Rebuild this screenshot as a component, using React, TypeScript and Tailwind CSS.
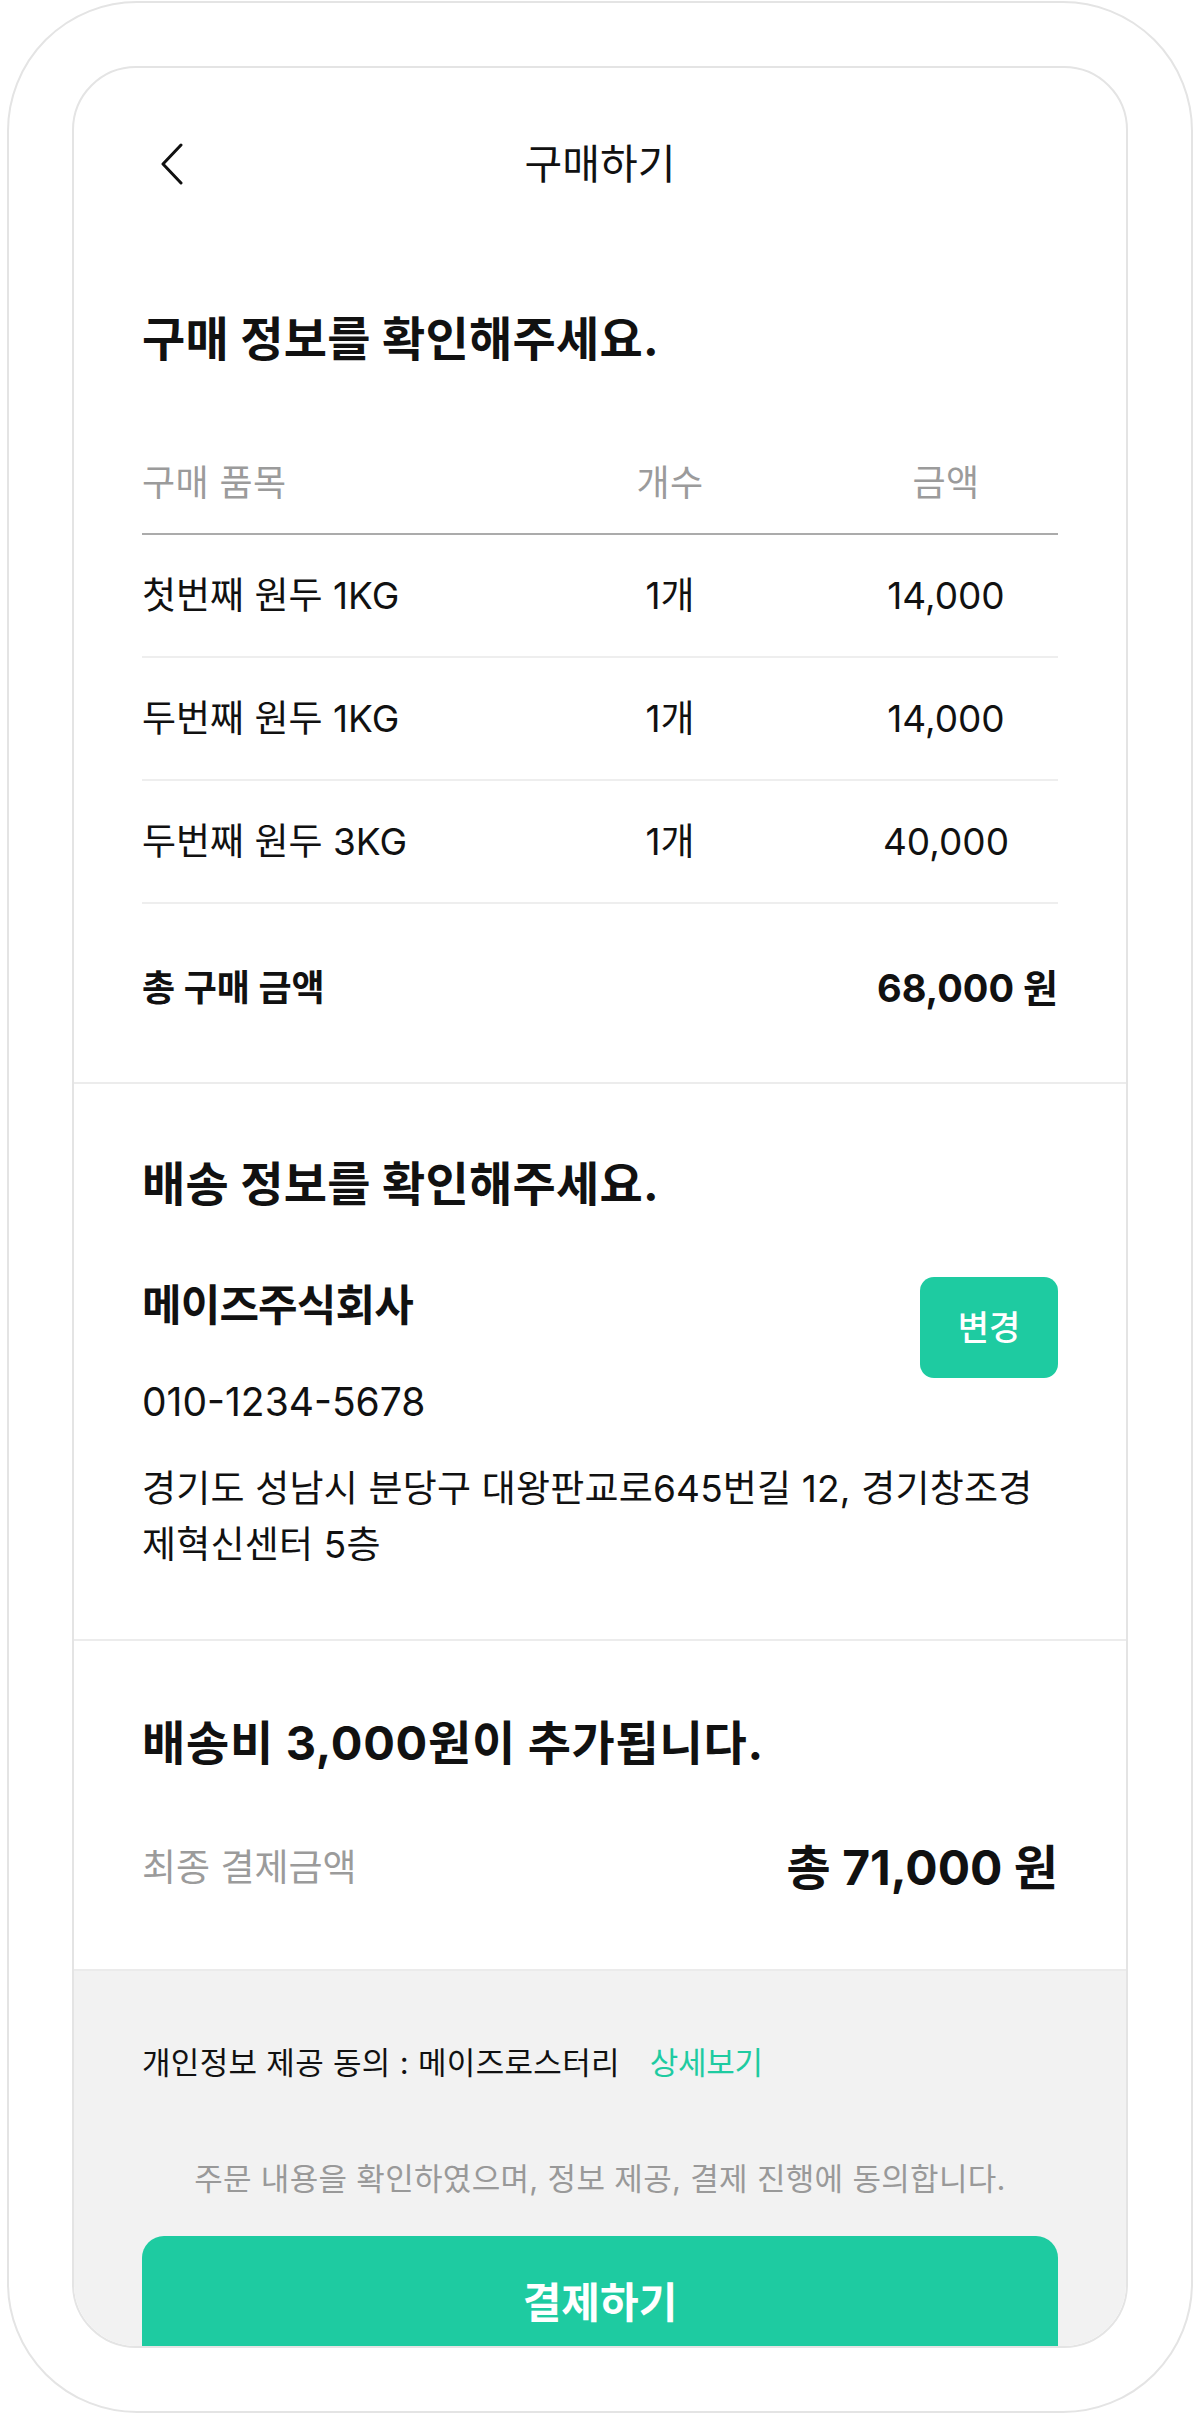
export default function App() {
  const rows = [
    { name: "첫번째 원두 1KG", qty: "1개", price: "14,000" },
    { name: "두번째 원두 1KG", qty: "1개", price: "14,000" },
    { name: "두번째 원두 3KG", qty: "1개", price: "40,000" },
  ];
  return (
    <div className="w-[1200px] h-[2414px] bg-white font-[Inter,'Noto_Sans_CJK_KR',sans-serif] text-[#111111] overflow-hidden">
      <div className="ml-[7px] mt-[1px] w-[1186px] h-[2412px] rounded-[130px] border-2 border-[#e4e4e4] pt-[63px] pl-[63px]">
        <div className="w-[1056px] h-[2282px] rounded-[64px] border-2 border-[#e4e4e4] overflow-hidden bg-white flex flex-col">
          {/* Nav */}
          <div className="h-[192px] shrink-0 grid grid-cols-[1fr_auto_1fr] items-center">
            <div className="pl-[86px] flex items-center">
              <svg width="24" height="42" viewBox="0 0 24 42" fill="none">
                <path d="M21 2 L3 21 L21 40" stroke="#111" strokeWidth="3" strokeLinecap="round" strokeLinejoin="round" />
              </svg>
            </div>
            <div className="text-[41px] leading-[56px] tracking-[0em]">구매하기</div>
            <div />
          </div>

          {/* Section 1 */}
          <div className="px-[68px] pt-[49px] border-b-2 border-[#ececec] shrink-0">
            <h1 className="text-[47px] leading-[60px] font-bold tracking-[0.005em]">구매 정보를 확인해주세요.</h1>
            <div className="mt-[90px] pb-[26px] grid grid-cols-[364px_328px_224px] text-[36px] leading-[48px] tracking-[0.01em] text-[#9b9b9b] border-b-2 border-[#ababab]">
              <div>구매 품목</div>
              <div className="text-center">개수</div>
              <div className="text-center">금액</div>
            </div>
            {rows.map((r, i) => (
              <div
                key={i}
                className="h-[123px] grid grid-cols-[364px_328px_224px] items-center text-[37px] leading-[48px] tracking-[0em] border-b-2 border-[#eeeeee]"
              >
                <div>{r.name}</div>
                <div className="text-center">{r.qty}</div>
                <div className="text-center">{r.price}</div>
              </div>
            ))}
            <div className="pt-[60px] pb-[70px] flex justify-between items-center h-[178px] font-bold">
              <div className="text-[36px] leading-[48px] tracking-[0em]">총 구매 금액</div>
              <div className="text-[38px] leading-[48px] tracking-[0em]">68,000 원</div>
            </div>
          </div>

          {/* Section 2 */}
          <div className="px-[68px] pt-[70px] pb-[66px] border-b-2 border-[#ececec] shrink-0">
            <h2 className="text-[47px] leading-[60px] font-bold tracking-[0.005em]">배송 정보를 확인해주세요.</h2>
            <div className="mt-[63px] flex justify-between items-start">
              <div>
                <div className="text-[43px] leading-[56px] font-bold tracking-[-0.02em]">메이즈주식회사</div>
                <div className="mt-[41px] text-[39px] leading-[56px] tracking-[0em]">010-1234-5678</div>
              </div>
              <button className="w-[138px] h-[101px] rounded-[14px] bg-[#1ecba1] text-white text-[34px] font-medium tracking-[0em] flex items-center justify-center">
                변경
              </button>
            </div>
            <div className="mt-[31px] text-[37px] leading-[56px] tracking-[0.005em]">
              경기도 성남시 분당구 대왕판교로645번길 12, 경기창조경
              <br />
              제혁신센터 5층
            </div>
          </div>

          {/* Section 3 */}
          <div className="px-[68px] pt-[72px] pb-[71px] shrink-0">
            <h2 className="text-[47px] leading-[60px] font-bold tracking-[0.015em]">배송비 3,000원이 추가됩니다.</h2>
            <div className="mt-[65px] flex justify-between items-center h-[60px]">
              <div className="text-[37px] leading-[48px] tracking-[0em] text-[#9b9b9b]">최종 결제금액</div>
              <div className="text-[48px] leading-[60px] font-bold tracking-[0em]">총 71,000 원</div>
            </div>
          </div>

          {/* Footer */}
          <div className="flex-1 bg-[#f2f2f2] border-t-2 border-[#ebebeb] px-[68px] pt-[72px]">
            <div className="flex items-center text-[31px] leading-[40px] tracking-[0.01em]">
              <span>개인정보 제공 동의 : 메이즈로스터리</span>
              <span className="ml-[30px] text-[#1ecba1] tracking-[-0.01em]">상세보기</span>
            </div>
            <div className="mt-[76px] text-center text-[31px] leading-[40px] tracking-[0.01em] text-[#999999]">
              주문 내용을 확인하였으며, 정보 제공, 결제 진행에 동의합니다.
            </div>
            <button className="mt-[37px] w-full h-[132px] rounded-[22px] bg-[#1ecba1] text-white text-[42px] font-bold tracking-[0em] flex items-center justify-center">
              결제하기
            </button>
          </div>
        </div>
      </div>
    </div>
  );
}
